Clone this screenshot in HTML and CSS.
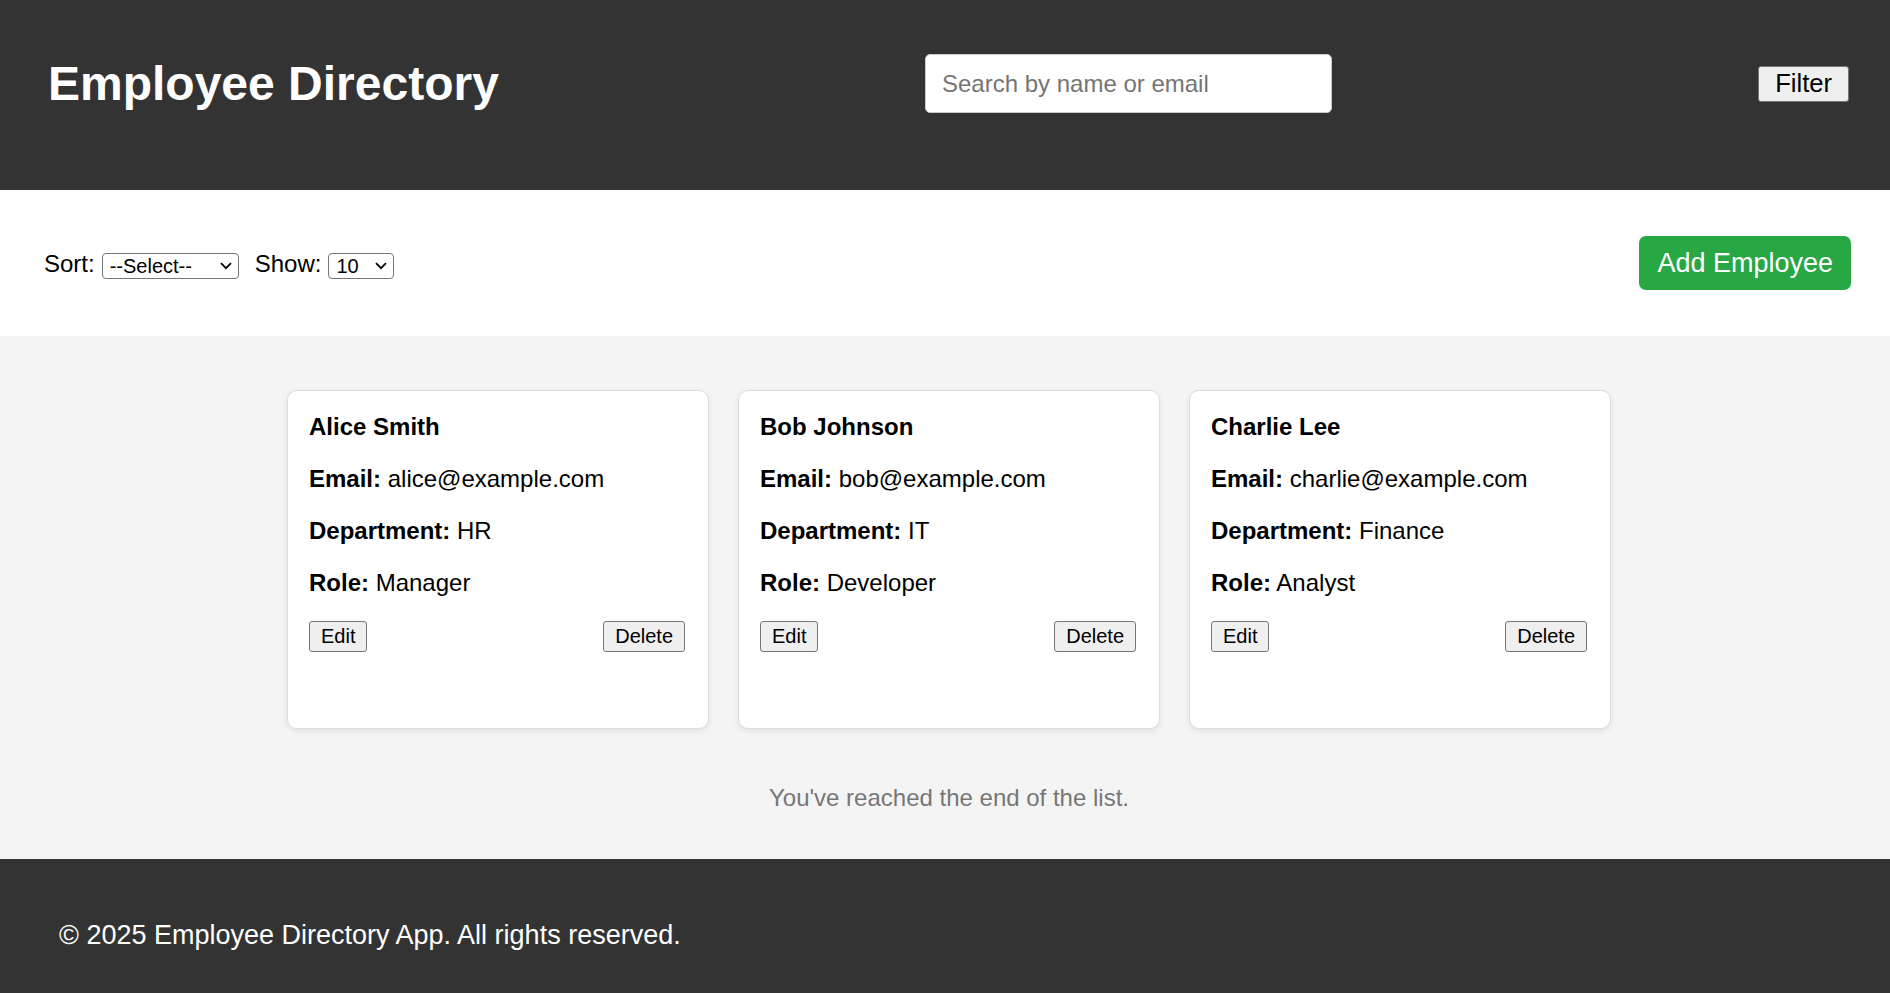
FILE: index.html
```html
<!DOCTYPE html>
<html lang="en">
<head>
<meta charset="utf-8">
<title>Employee Directory</title>
<link rel="stylesheet" href="styles.css">
</head>
<body>
<header class="site-header">
  <h1 class="site-title">Employee Directory</h1>
  <input class="search" type="text" placeholder="Search by name or email">
  <button class="filter-btn" type="button">Filter</button>
</header>

<section class="controls">
  <div class="control-group">
    <label class="ctl-label" for="sort">Sort:</label>
    <span class="select-wrap">
      <select class="ctl-select sort-select" id="sort">
        <option>--Select--</option>
        <option>First Name</option>
        <option>Department</option>
      </select>
      <svg class="chev" width="12" height="8" viewBox="0 0 12 8" aria-hidden="true"><path d="M1 1.2L6 6.2L11 1.2" fill="none" stroke="#000" stroke-width="1.8"/></svg>
    </span>
    <label class="ctl-label show-label" for="show">Show:</label>
    <span class="select-wrap">
      <select class="ctl-select show-select" id="show">
        <option>10</option>
        <option>25</option>
        <option>50</option>
      </select>
      <svg class="chev" width="12" height="8" viewBox="0 0 12 8" aria-hidden="true"><path d="M1 1.2L6 6.2L11 1.2" fill="none" stroke="#000" stroke-width="1.8"/></svg>
    </span>
  </div>
  <button class="add-btn" type="button">Add Employee</button>
</section>

<main class="content">
  <div class="cards">
    <article class="card">
      <h3 class="card-name">Alice Smith</h3>
      <p class="card-line"><strong>Email:</strong> alice@example.com</p>
      <p class="card-line"><strong>Department:</strong> HR</p>
      <p class="card-line"><strong>Role:</strong> Manager</p>
      <div class="card-actions">
        <button class="small-btn" type="button">Edit</button>
        <button class="small-btn" type="button">Delete</button>
      </div>
    </article>
    <article class="card">
      <h3 class="card-name">Bob Johnson</h3>
      <p class="card-line"><strong>Email:</strong> bob@example.com</p>
      <p class="card-line"><strong>Department:</strong> IT</p>
      <p class="card-line"><strong>Role:</strong> Developer</p>
      <div class="card-actions">
        <button class="small-btn" type="button">Edit</button>
        <button class="small-btn" type="button">Delete</button>
      </div>
    </article>
    <article class="card">
      <h3 class="card-name">Charlie Lee</h3>
      <p class="card-line"><strong>Email:</strong> charlie@example.com</p>
      <p class="card-line"><strong>Department:</strong> Finance</p>
      <p class="card-line"><strong>Role:</strong> Analyst</p>
      <div class="card-actions">
        <button class="small-btn" type="button">Edit</button>
        <button class="small-btn" type="button">Delete</button>
      </div>
    </article>
  </div>
  <p class="end-msg">You've reached the end of the list.</p>
</main>

<footer class="site-footer">
  <p class="footer-text">&copy; 2025 Employee Directory App. All rights reserved.</p>
</footer>
</body>
</html>
```

FILE: styles.css
```css
* {
  box-sizing: border-box;
}

html, body {
  margin: 0;
  padding: 0;
}

body {
  font-family: "Liberation Sans", Arial, sans-serif;
  font-size: 24px;
  color: #000;
  background: #f4f4f4;
  overflow: hidden;
}

.site-header {
  background: #333;
  color: #fff;
  display: flex;
  justify-content: space-between;
  align-items: center;
  height: 190px;
  padding: 54px 41px 77px 48px;
}

.site-title {
  margin: 0;
  font-size: 48px;
  font-weight: bold;
  line-height: normal;
}

.search {
  width: 407px;
  height: 59px;
  padding: 0 16px;
  font-family: inherit;
  font-size: 24px;
  color: #000;
  background: #fff;
  border: 1px solid #ccc;
  border-radius: 5px;
  outline: none;
}

.search::placeholder {
  color: #757575;
}

.filter-btn {
  font-family: inherit;
  font-size: 25.6px;
  line-height: normal;
  height: 36px;
  padding: 0 16px;
  color: #000;
  background: #efefef;
  border: 1px solid #767676;
  border-radius: 3px;
}

.controls {
  background: #fff;
  height: 146px;
  display: flex;
  align-items: center;
  justify-content: space-between;
  padding: 0 39px 0 44px;
}

.control-group {
  display: flex;
  align-items: center;
  margin-top: 2px;
}

.ctl-label {
  font-size: 24px;
  margin-right: 7px;
}

.show-label {
  margin-left: 16px;
}

.select-wrap {
  position: relative;
  display: inline-flex;
  margin-top: 4px;
}

.ctl-select {
  -webkit-appearance: none;
  appearance: none;
  font-family: inherit;
  font-size: 20px;
  line-height: normal;
  height: 26px;
  padding: 0 0 0 7px;
  color: #000;
  background: #fff;
  border: 1px solid #767676;
  border-radius: 4px;
  outline: none;
}

.sort-select {
  width: 137px;
}

.show-select {
  width: 66px;
}

.chev {
  position: absolute;
  right: 7px;
  top: 9px;
  pointer-events: none;
}

.add-btn {
  font-family: inherit;
  font-size: 27px;
  line-height: normal;
  height: 54px;
  padding: 0 18px;
  color: #fff;
  background: #28a745;
  border: none;
  border-radius: 7px;
}

.content {
  background: #f4f4f4;
  padding: 54px 0 47px 8px;
}

.cards {
  display: grid;
  grid-template-columns: repeat(3, 422px);
  gap: 29px;
  justify-content: center;
}

.card {
  background: #fff;
  border: 1px solid #ddd;
  border-radius: 10px;
  height: 339px;
  padding: 22px 23px 22px 21px;
  box-shadow: 0 2px 6px rgba(0, 0, 0, 0.08);
}

.card-name {
  margin: 0 0 24px;
  font-size: 24px;
  font-weight: bold;
  line-height: normal;
}

.card-line {
  margin: 0 0 24px;
  line-height: normal;
}

.card-actions {
  display: flex;
  justify-content: space-between;
}

.small-btn {
  font-family: inherit;
  font-size: 20px;
  line-height: normal;
  height: 31px;
  padding: 0 11px;
  color: #000;
  background: #efefef;
  border: 1px solid #767676;
  border-radius: 3px;
}

.end-msg {
  margin: 55px 0 0;
  text-align: center;
  color: #777;
  font-size: 24px;
  line-height: normal;
}

.site-footer {
  background: #333;
  color: #fff;
  height: 134px;
  padding: 61px 59px 0;
}

.footer-text {
  margin: 0;
  font-size: 27px;
  line-height: normal;
}
```
